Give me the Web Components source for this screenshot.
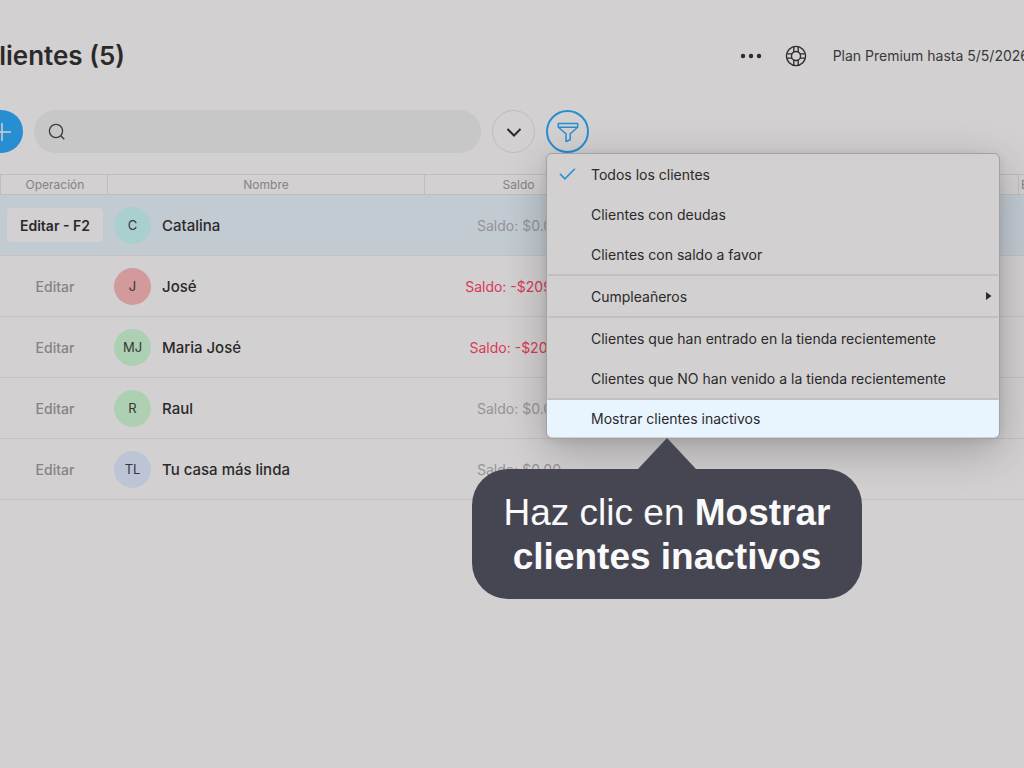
<!DOCTYPE html>
<html lang="es">
<head>
<meta charset="utf-8">
<meta name="viewport" content="width=device-width, initial-scale=1">
<title>Clientes</title>
<style>
  body {
    margin: 0;
    min-height: 100vh;
    overflow-x: hidden;
    background: #d2d0d0;
    color: #2a292b;
    font-family: Inter, "Liberation Sans", sans-serif;
    --accent: #288ed2;
    --line: #bebcbd;
    --surface: #d2d0d0;
  }
</style>
</head>
<body>
<client-page></client-page>

<script>
(function () {
  function attach(el, html) {
    const template = document.createElement("template");
    template.innerHTML = html;
    el.attachShadow({ mode: "open" });
    el.shadowRoot.appendChild(template.content.cloneNode(true));
  }

  class PageHeader extends HTMLElement {
    constructor() {
      super();
      attach(this, `
        <style>
          :host {
            display: flex;
            align-items: center;
            height: 44px;
          }
          h1 {
            flex: 1;
            margin: 0;
            font-size: 26px;
            line-height: 32px;
            font-weight: 600;
          }
          button {
            display: flex;
            margin: 0;
            padding: 0;
            border: 0;
            background: none;
            color: inherit;
          }
          .more { margin-right: 23px; }
          .help { margin-right: 26px; }
          .plan {
            font-size: 14px;
            line-height: 20px;
            white-space: nowrap;
            color: #3a393b;
          }
        </style>
        <h1><slot></slot></h1>
        <button class="more" aria-label="Más opciones">
          <svg width="22" height="22" viewBox="0 0 22 22" fill="currentColor">
            <circle cx="3" cy="11" r="2.2"/><circle cx="11" cy="11" r="2.2"/><circle cx="19" cy="11" r="2.2"/>
          </svg>
        </button>
        <button class="help" aria-label="Ayuda">
          <svg width="22" height="22" viewBox="0 0 22 22" fill="none" stroke="currentColor" stroke-width="1.3">
            <circle cx="11" cy="11" r="9.6"/>
            <circle cx="11" cy="11" r="4.5"/>
            <path d="M8.8 7V1.8M13.2 7V1.8M8.8 15v5.2M13.2 15v5.2M7 8.8H1.8M7 13.2H1.8M15 8.8h5.2M15 13.2h5.2"/>
          </svg>
        </button>
        <span class="plan"><slot name="plan"></slot></span>
      `);
    }
  }

  class RoundButton extends HTMLElement {
    constructor() {
      super();
      attach(this, `
        <style>
          :host { display: block; flex: none; }
          button {
            display: flex;
            align-items: center;
            justify-content: center;
            box-sizing: border-box;
            width: 43px;
            height: 43px;
            padding: 0;
            border: 1px solid var(--line);
            border-radius: 50%;
            background: none;
            color: inherit;
          }
          :host([kind="primary"]) button {
            border: 0;
            background: var(--accent);
            color: #d2d0d0;
          }
          :host([kind="active"]) button {
            border: 2px solid var(--accent);
            color: var(--accent);
          }
        </style>
        <button><slot></slot></button>
      `);
    }

    connectedCallback() {
      this.shadowRoot.querySelector("button").setAttribute("aria-label", this.getAttribute("label"));
    }
  }

  class SearchBox extends HTMLElement {
    constructor() {
      super();
      attach(this, `
        <style>
          :host { display: block; flex: 0 1 447px; }
          label {
            display: flex;
            align-items: center;
            gap: 10px;
            height: 43px;
            padding: 0 14px;
            border-radius: 22px;
            background: #c7c7c7;
          }
          svg { flex: none; }
          input {
            flex: 1;
            min-width: 0;
            border: 0;
            outline: 0;
            background: none;
            font: inherit;
            font-size: 15px;
          }
        </style>
        <label>
          <svg width="18" height="18" viewBox="0 0 18 18" fill="none" stroke="#3a393b" stroke-width="1.3">
            <circle cx="8" cy="8" r="6.6"/><path d="M12.7 12.7L16.3 16.3"/>
          </svg>
          <input type="text" aria-label="Buscar clientes">
        </label>
      `);
    }
  }

  class ClientTable extends HTMLElement {
    constructor() {
      super();
      attach(this, `
        <style>
          :host { display: block; overflow: hidden; }
          /* the last column runs past the right edge of the window */
          table {
            width: calc(100% + 60px);
            table-layout: fixed;
            border-collapse: separate;
            border-spacing: 0;
          }
          th {
            box-sizing: border-box;
            height: 21px;
            padding: 0;
            border-top: 1px solid var(--line);
            border-right: 1px solid var(--line);
            border-bottom: 1px solid var(--line);
            font-size: 12px;
            line-height: 16px;
            font-weight: 400;
            color: #858385;
          }
          th:first-child { border-left: 1px solid var(--line); }
          th:last-child { text-align: left; padding-left: 2px; }
          td {
            box-sizing: border-box;
            height: 61px;
            padding: 0;
            border-bottom: 1px solid #c3c1c2;
            font-size: 14px;
            text-align: center;
          }
          th:first-child, td:first-child { padding-left: 2px; }
          tr.selected td { background: #c2cad2; }
          button {
            height: 34px;
            padding: 0 13px;
            border: 0;
            border-radius: 4px;
            background: none;
            font: inherit;
            font-weight: 500;
            color: #858385;
          }
          .selected button {
            background: var(--surface);
            color: #2a292b;
            font-weight: 600;
          }
          .client {
            display: flex;
            align-items: center;
            gap: 11px;
            padding-left: 6px;
            font-size: 15px;
            font-weight: 500;
          }
          .avatar {
            width: 37px;
            height: 37px;
            border-radius: 50%;
            font-size: 13px;
            line-height: 37px;
            font-weight: 400;
            color: #363537;
          }
          .balance { color: #969496; }
          .debt { color: #d83a56; }
        </style>
        <table>
          <colgroup>
            <col style="width: 108px"><col style="width: 317px"><col style="width: 188px"><col><col style="width: 65px">
          </colgroup>
          <thead>
            <tr><th>Operación</th><th>Nombre</th><th>Saldo</th><th></th><th>Email</th></tr>
          </thead>
          <tbody></tbody>
        </table>
      `);
    }

    connectedCallback() {
      this.populate([
        { initials: "C", name: "Catalina", color: "#aad0ce", balance: "$0.00", selected: true },
        { initials: "J", name: "José", color: "#d29a9a", balance: "-$209.00" },
        { initials: "MJ", name: "Maria José", color: "#aed0b2", balance: "-$20.00" },
        { initials: "R", name: "Raul", color: "#aed0b2", balance: "$0.00" },
        { initials: "TL", name: "Tu casa más linda", color: "#bcc4d6", balance: "$0.00" }
      ]);
    }

    populate(clients) {
      const body = this.shadowRoot.querySelector("tbody");
      body.innerHTML = "";
      clients.forEach((c) => {
        const tr = document.createElement("tr");
        if (c.selected) tr.className = "selected";
        tr.innerHTML = `
          <td><button>${c.selected ? "Editar - F2" : "Editar"}</button></td>
          <td><div class="client"><span class="avatar" style="background: ${c.color}">${c.initials}</span><span>${c.name}</span></div></td>
          <td class="balance ${c.balance[0] === "-" ? "debt" : ""}">Saldo: ${c.balance}</td>
          <td></td>
          <td></td>`;
        body.appendChild(tr);
      });
    }
  }

  class MenuItem extends HTMLElement {
    constructor() {
      super();
      attach(this, `
        <style>
          :host { display: block; }
          button {
            display: flex;
            align-items: center;
            width: 100%;
            height: 40px;
            padding: 0 7px 0 12px;
            border: 0;
            background: none;
            color: inherit;
            font: inherit;
            font-size: 14px;
            text-align: left;
          }
          .mark { flex: none; width: 32px; height: 16px; }
          .text { flex: 1; white-space: nowrap; }
          .check, .arrow { display: none; }
          :host([checked]) .check, :host([submenu]) .arrow { display: block; }
          :host([highlighted]) button {
            height: 37px;
            border-radius: 0 0 5px 5px;
            background: #e8f5ff;
          }
        </style>
        <button role="menuitem">
          <span class="mark">
            <svg class="check" width="18" height="16" viewBox="0 0 18 16" fill="none" stroke="#288ed2" stroke-width="1.6">
              <path d="M.9 7.8L5.9 12.8L15.9 2.8"/>
            </svg>
          </span>
          <span class="text"><slot></slot></span>
          <svg class="arrow" width="6" height="8" viewBox="0 0 6 8"><path d="M0 0L5.5 4L0 8Z" fill="#2a292b"/></svg>
        </button>
      `);
    }
  }

  class FilterMenu extends HTMLElement {
    constructor() {
      super();
      attach(this, `
        <style>
          :host {
            display: block;
            box-sizing: border-box;
            width: 454px;
            padding-bottom: 1px;
            border: 1px solid #a3a1a2;
            border-radius: 6px;
            background: var(--surface);
            box-shadow: 0 12px 44px rgba(0, 0, 0, .24), 0 2px 8px rgba(0, 0, 0, .08);
          }
          ::slotted(hr) {
            height: 2px;
            margin: 0 1px;
            border: 0;
            background: #c1bfc0;
          }
        </style>
        <div role="menu"><slot></slot></div>
        <slot name="tip"></slot>
      `);
    }
  }

  class CoachMark extends HTMLElement {
    constructor() {
      super();
      attach(this, `
        <style>
          :host {
            display: flex;
            flex-direction: column;
            align-items: center;
            width: 390px;
            color: #fafafa;
            font-family: "Liberation Sans", Arial, sans-serif;
          }
          svg { display: block; }
          p {
            box-sizing: border-box;
            width: 100%;
            margin: 0;
            padding: 22px 28px 20px;
            border-radius: 36px;
            background: #464652;
            font-size: 37px;
            line-height: 44px;
            text-align: center;
          }
        </style>
        <svg width="60" height="31" viewBox="0 0 60 31"><path d="M30 0L59 31H1Z" fill="#464652"/></svg>
        <p><slot></slot></p>
      `);
    }
  }

  class ClientPage extends HTMLElement {
    constructor() {
      super();
      attach(this, `
        <style>
          :host { display: block; padding-top: 34px; }
          /* the view is scrolled a little, so both ends are cut off */
          .top { margin: 0 -5px 0 -20px; }
          .tools {
            display: flex;
            align-items: center;
            gap: 11px;
            margin: 32px 0 21px;
          }
          .filter { position: relative; flex: none; }
          filter-menu { position: absolute; top: 43px; left: 0; z-index: 1; }
          coach-mark { position: absolute; top: 100%; left: -75px; }
        </style>
        <div class="top">
          <page-header>Clientes (5)<span slot="plan">Plan Premium hasta 5/5/2026</span></page-header>
          <div class="tools">
            <round-button kind="primary" label="Agregar cliente">
              <svg width="20" height="20" viewBox="0 0 20 20" stroke="currentColor" stroke-width="1.5"><path d="M10 1V19M1 10H19"/></svg>
            </round-button>
            <search-box></search-box>
            <round-button label="Desplegar">
              <svg width="16" height="16" viewBox="0 0 16 16" fill="none" stroke="currentColor" stroke-width="2"><path d="M1.5 5L8 11.5L14.5 5"/></svg>
            </round-button>
            <div class="filter">
              <round-button kind="active" label="Filtrar">
                <svg width="24" height="24" viewBox="0 0 24 24" fill="none" stroke="currentColor" stroke-width="1.5" stroke-linejoin="round">
                  <path d="M2.3 3.5H21.7V7.3L14.2 13.8V19.8L10 21.5V13.8L2.3 7.3ZM2.3 7.3H21.7"/>
                </svg>
              </round-button>
              <filter-menu>
                <menu-item checked>Todos los clientes</menu-item>
                <menu-item>Clientes con deudas</menu-item>
                <menu-item>Clientes con saldo a favor</menu-item>
                <hr>
                <menu-item submenu>Cumpleañeros</menu-item>
                <hr>
                <menu-item>Clientes que han entrado en la tienda recientemente</menu-item>
                <menu-item>Clientes que NO han venido a la tienda recientemente</menu-item>
                <hr>
                <menu-item highlighted>Mostrar clientes inactivos</menu-item>
                <coach-mark slot="tip">Haz clic en <b>Mostrar clientes inactivos</b></coach-mark>
              </filter-menu>
            </div>
          </div>
        </div>
        <client-table></client-table>
      `);
    }
  }

  customElements.define("page-header", PageHeader);
  customElements.define("round-button", RoundButton);
  customElements.define("search-box", SearchBox);
  customElements.define("client-table", ClientTable);
  customElements.define("menu-item", MenuItem);
  customElements.define("filter-menu", FilterMenu);
  customElements.define("coach-mark", CoachMark);
  customElements.define("client-page", ClientPage);
})();
</script>
</body>
</html>
